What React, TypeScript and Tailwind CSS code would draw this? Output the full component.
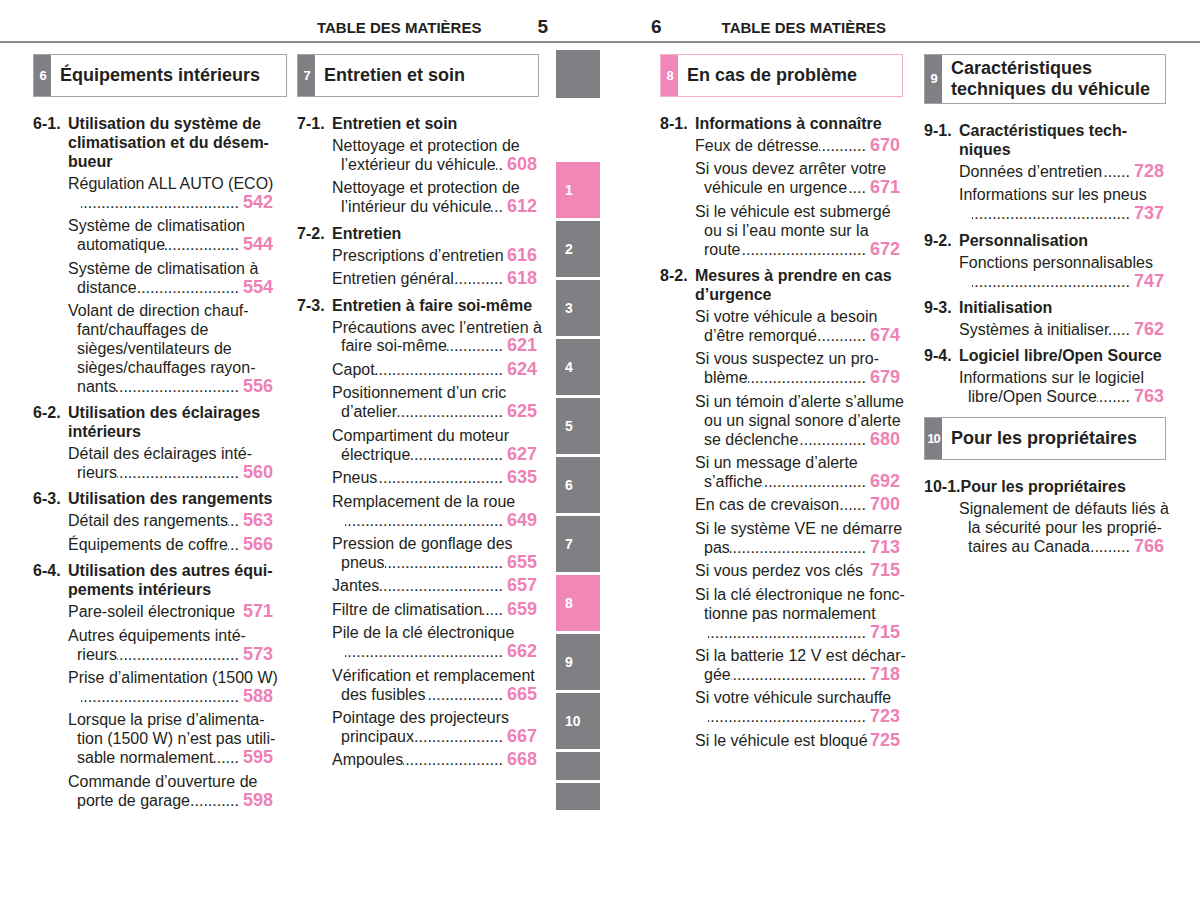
import React from 'react';

type Item = { t: 'i'; lines: string[]; page: string; nodots?: boolean };
type Head = { t: 'h'; label: string; lines: string[] };
type BoxE = { t: 'b'; num: string; title: string[]; pink?: boolean };
type Entry = Item | Head | BoxE;

const DOTS = '.'.repeat(90);

const I = (lines: string[], page: string, nodots?: boolean): Item => ({ t: 'i', lines, page, nodots });
const H = (label: string, lines: string[]): Head => ({ t: 'h', label, lines });
const B = (num: string, title: string[], pink?: boolean): BoxE => ({ t: 'b', num, title, pink });

const col1: Entry[] = [
  B('6', ['Équipements intérieurs']),
  H('6-1.', ['Utilisation du système de', 'climatisation et du désem-', 'bueur']),
  I(['Régulation ALL AUTO (ECO)', ''], '542'),
  I(['Système de climatisation', 'automatique'], '544'),
  I(['Système de climatisation à', 'distance'], '554'),
  I(['Volant de direction chauf-', 'fant/chauffages de', 'sièges/ventilateurs de', 'sièges/chauffages rayon-', 'nants'], '556'),
  H('6-2.', ['Utilisation des éclairages', 'intérieurs']),
  I(['Détail des éclairages inté-', 'rieurs'], '560'),
  H('6-3.', ['Utilisation des rangements']),
  I(['Détail des rangements'], '563'),
  I(['Équipements de coffre'], '566'),
  H('6-4.', ['Utilisation des autres équi-', 'pements intérieurs']),
  I(['Pare-soleil électronique'], '571', true),
  I(['Autres équipements inté-', 'rieurs'], '573'),
  I(['Prise d’alimentation (1500 W)', ''], '588'),
  I(['Lorsque la prise d’alimenta-', 'tion (1500 W) n’est pas utili-', 'sable normalement'], '595'),
  I(['Commande d’ouverture de', 'porte de garage'], '598'),
];

const col2: Entry[] = [
  B('7', ['Entretien et soin']),
  H('7-1.', ['Entretien et soin']),
  I(['Nettoyage et protection de', 'l’extérieur du véhicule'], '608'),
  I(['Nettoyage et protection de', 'l’intérieur du véhicule'], '612'),
  H('7-2.', ['Entretien']),
  I(['Prescriptions d’entretien'], '616', true),
  I(['Entretien général'], '618'),
  H('7-3.', ['Entretien à faire soi-même']),
  I(['Précautions avec l’entretien à', 'faire soi-même'], '621'),
  I(['Capot'], '624'),
  I(['Positionnement d’un cric', 'd’atelier'], '625'),
  I(['Compartiment du moteur', 'électrique'], '627'),
  I(['Pneus'], '635'),
  I(['Remplacement de la roue', ''], '649'),
  I(['Pression de gonflage des', 'pneus'], '655'),
  I(['Jantes'], '657'),
  I(['Filtre de climatisation'], '659'),
  I(['Pile de la clé électronique', ''], '662'),
  I(['Vérification et remplacement', 'des fusibles'], '665'),
  I(['Pointage des projecteurs', 'principaux'], '667'),
  I(['Ampoules'], '668'),
];

const col3: Entry[] = [
  B('8', ['En cas de problème'], true),
  H('8-1.', ['Informations à connaître']),
  I(['Feux de détresse'], '670'),
  I(['Si vous devez arrêter votre', 'véhicule en urgence'], '671'),
  I(['Si le véhicule est submergé', 'ou si l’eau monte sur la', 'route'], '672'),
  H('8-2.', ['Mesures à prendre en cas', 'd’urgence']),
  I(['Si votre véhicule a besoin', 'd’être remorqué'], '674'),
  I(['Si vous suspectez un pro-', 'blème'], '679'),
  I(['Si un témoin d’alerte s’allume', 'ou un signal sonore d’alerte', 'se déclenche'], '680'),
  I(['Si un message d’alerte', 's’affiche'], '692'),
  I(['En cas de crevaison'], '700'),
  I(['Si le système VE ne démarre', 'pas'], '713'),
  I(['Si vous perdez vos clés'], '715', true),
  I(['Si la clé électronique ne fonc-', 'tionne pas normalement', ''], '715'),
  I(['Si la batterie 12 V est déchar-', 'gée'], '718'),
  I(['Si votre véhicule surchauffe', ''], '723'),
  I(['Si le véhicule est bloqué'], '725', true),
];

const col4: Entry[] = [
  B('9', ['Caractéristiques', 'techniques du véhicule']),
  H('9-1.', ['Caractéristiques tech-', 'niques']),
  I(['Données d’entretien'], '728'),
  I(['Informations sur les pneus', ''], '737'),
  H('9-2.', ['Personnalisation']),
  I(['Fonctions personnalisables', ''], '747'),
  H('9-3.', ['Initialisation']),
  I(['Systèmes à initialiser'], '762'),
  H('9-4.', ['Logiciel libre/Open Source']),
  I(['Informations sur le logiciel', 'libre/Open Source'], '763'),
  B('10', ['Pour les propriétaires']),
  H('10-1.', ['Pour les propriétaires']),
  I(['Signalement de défauts liés à', 'la sécurité pour les proprié-', 'taires au Canada'], '766'),
];

function BoxView({ e, mt }: { e: BoxE; mt: string }) {
  const two = e.title.length > 1;
  return (
    <div
      className={`${mt} flex border ${e.pink ? 'border-[#f4aecd]' : 'border-[#a5a5a7]'} ${two ? 'h-[50px]' : 'h-[43px]'}`}
    >
      <div
        className={`flex w-[17px] shrink-0 items-center justify-center text-[13px] font-bold tracking-[-1px] text-white ${e.pink ? 'bg-[#f087b7]' : 'bg-[#7f8084]'}`}
      >
        {e.num}
      </div>
      <div className="flex flex-col justify-center pl-[9px] text-[18px] font-bold leading-[21px] text-[#231f20]">
        {e.title.map((t, i) => (
          <div key={i} className="whitespace-nowrap">
            {t}
          </div>
        ))}
      </div>
    </div>
  );
}

function HeadView({ e, mt }: { e: Head; mt: string }) {
  return (
    <div className={`${mt} flex text-[16px] font-bold leading-[19px]`}>
      <div className="min-w-[35px] shrink-0 whitespace-nowrap">{e.label}</div>
      <div>
        {e.lines.map((l, i) => (
          <div key={i} className="whitespace-nowrap">
            {l}
          </div>
        ))}
      </div>
    </div>
  );
}

function ItemView({ e, mt }: { e: Item; mt: string }) {
  const n = e.lines.length;
  return (
    <div className={`${mt} pl-[35px] text-[16px] leading-[18.9px]`}>
      {e.lines.map((l, i) => {
        const last = i === n - 1;
        const indent = i === 0 ? '' : l === '' ? 'pl-[13px]' : 'pl-[9px]';
        if (!last)
          return (
            <div key={i} className={`h-[18.9px] whitespace-nowrap ${indent}`}>
              {l}
            </div>
          );
        return (
          <div key={i} className={`flex h-[18.9px] items-baseline ${indent}`}>
            {l !== '' && <span className="shrink-0 whitespace-nowrap">{l}</span>}
            {e.nodots ? (
              <span className="flex-1" />
            ) : (
              <span className="flex min-w-0 flex-1 items-baseline justify-end overflow-hidden whitespace-nowrap pl-[2px] pr-[4px]">
                <span>{DOTS}</span>
              </span>
            )}
            <span className="shrink-0 text-[18px] font-bold leading-[14px] text-[#ef80b5]">{e.page}</span>
          </div>
        );
      })}
    </div>
  );
}

function Column({ entries, width, pr }: { entries: Entry[]; width: string; pr: string }) {
  return (
    <div className={`${width} mt-[11px] shrink-0 text-[#231f20]`}>
      {entries.map((e, idx) => {
        const prev = idx > 0 ? entries[idx - 1] : null;
        if (e.t === 'b') {
          return <BoxView key={idx} e={e} mt={prev ? 'mt-[10px]' : ''} />;
        }
        if (e.t === 'h') {
          const mt = prev && prev.t === 'b' ? 'mt-[17px]' : 'mt-[6.5px]';
          return (
            <div key={idx} className={pr}>
              <HeadView e={e} mt={mt} />
            </div>
          );
        }
        const mt = prev && prev.t === 'h' ? 'mt-[4px]' : 'mt-[4.6px]';
        return (
          <div key={idx} className={pr}>
            <ItemView e={e} mt={mt} />
          </div>
        );
      })}
    </div>
  );
}

function Tabs() {
  const tabs = ['1', '2', '3', '4', '5', '6', '7', '8', '9', '10'];
  return (
    <div className="ml-[17px] mt-[7px] flex w-[44px] shrink-0 flex-col">
      <div className="h-[48px] bg-[#7f8084]" />
      <div className="mt-[64px] flex flex-col gap-[3px]">
        {tabs.map((t) => (
          <div
            key={t}
            className={`flex h-[56px] items-center pl-[9px] text-[14px] font-bold text-white ${
              t === '1' || t === '8' ? 'bg-[#f087b7]' : 'bg-[#7f8084]'
            }`}
          >
            {t}
          </div>
        ))}
        <div className="h-[28px] bg-[#7f8084]" />
        <div className="h-[27px] bg-[#7f8084]" />
      </div>
    </div>
  );
}

export default function App() {
  return (
    <div className="h-[919px] w-[1200px] overflow-hidden bg-white font-['Liberation_Sans',Arial,Helvetica,sans-serif] text-[#231f20]">
      <div className="flex h-[41px] items-end pb-[0px]">
        <div className="flex w-[600px] items-baseline justify-end pr-[52px]">
          <span className="text-[15px] font-bold">TABLE DES MATIÈRES</span>
          <span className="ml-[56px] text-[19px] font-bold">5</span>
        </div>
        <div className="flex w-[600px] items-baseline pl-[51px]">
          <span className="text-[19px] font-bold">6</span>
          <span className="ml-[60px] text-[15px] font-bold">TABLE DES MATIÈRES</span>
        </div>
      </div>
      <div className="h-[2px] bg-[#8c8c8c]" />
      <div className="flex items-start pl-[33px]">
        <Column entries={col1} width="w-[254px]" pr="pr-[14px]" />
        <div className="ml-[10px]">
          <Column entries={col2} width="w-[242px]" pr="pr-[2px]" />
        </div>
        <Tabs />
        <div className="ml-[60px]">
          <Column entries={col3} width="w-[243px]" pr="pr-[3px]" />
        </div>
        <div className="ml-[21px]">
          <Column entries={col4} width="w-[242px]" pr="pr-[2px]" />
        </div>
      </div>
    </div>
  );
}
